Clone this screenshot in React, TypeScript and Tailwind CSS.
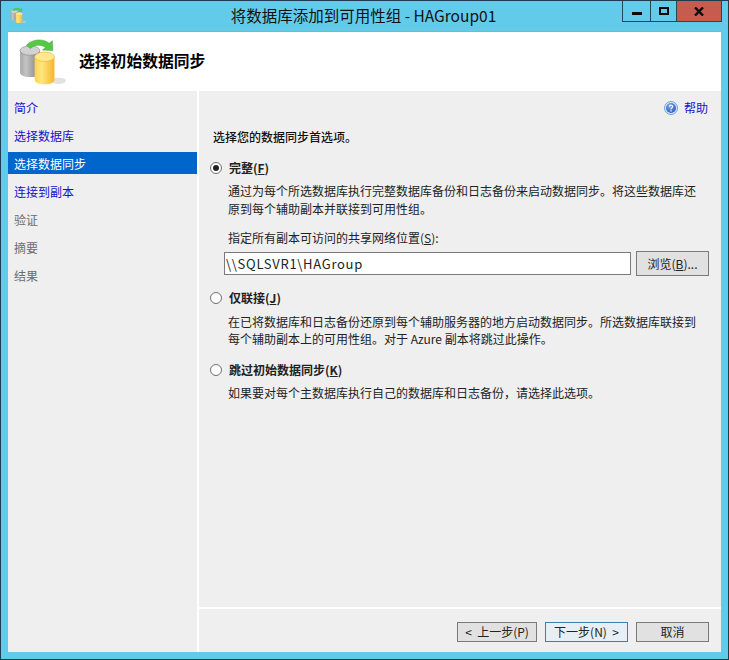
const FONT = "font-['Microsoft_YaHei','Noto_Sans_CJK_SC','Noto_Sans',sans-serif]"

function DbIcon({ size }: { size: number }) {
  return (
    <svg width={size} height={size} viewBox="0 0 48 48">
      <defs>
        <linearGradient id="gray" x1="0" x2="1" y1="0" y2="0">
          <stop offset="0" stopColor="#a8a8a8" />
          <stop offset="0.3" stopColor="#c4c4c4" />
          <stop offset="1" stopColor="#7d7d7d" />
        </linearGradient>
        <linearGradient id="gold" x1="0" x2="1" y1="0" y2="0">
          <stop offset="0" stopColor="#ffd34f" />
          <stop offset="0.35" stopColor="#ffe67d" />
          <stop offset="1" stopColor="#f7b52e" />
        </linearGradient>
      </defs>
      <ellipse cx="39" cy="42" rx="7" ry="3" fill="#cfcfcf" opacity="0.6" />
      <path d="M2 13v21c0 3 5 4.500 9.500 4.500S21 37 21 34V13z" fill="url(#gray)" />
      <ellipse cx="11.500" cy="13" rx="9.500" ry="4.500" fill="#d2d2d2" stroke="#8f8f8f" strokeWidth="0.6" />
      <path d="M16 19v22c0 3 4.500 4.500 9.500 4.500S35 44 35 41V19z" fill="url(#gold)" />
      <ellipse cx="25.500" cy="19" rx="9.500" ry="4.500" fill="#ffe88f" stroke="#e7b53c" strokeWidth="0.6" />
      <path d="M8 8C13 2 24 1 30 6l3-2.500 0.500 9.500-10-0.500 3-2.500C22 7 16 7 12 11z" fill="#58c844" stroke="#3aa636" strokeWidth="0.5" />
    </svg>
  )
}

function HelpIcon() {
  return (
    <svg width="14" height="14" viewBox="0 0 14 14">
      <defs>
        <radialGradient id="help" cx="0.4" cy="0.3" r="0.8">
          <stop offset="0" stopColor="#7fa9ea" />
          <stop offset="1" stopColor="#1f55b8" />
        </radialGradient>
      </defs>
      <circle cx="7" cy="7" r="6.500" fill="#dbe8fa" stroke="#5b8ad0" strokeWidth="0.8" />
      <circle cx="7" cy="7" r="5" fill="url(#help)" />
      <path d="M5.400 5.600C5.500 3.700 8.800 3.800 8.700 5.700 8.600 6.900 7 6.900 7 8.200" fill="none" stroke="#fff" strokeWidth="1.200" />
      <rect x="6.400" y="9.200" width="1.300" height="1.300" fill="#fff" />
    </svg>
  )
}

function Radio({ checked }: { checked?: boolean }) {
  return (
    <span className="flex h-[12px] w-[12px] items-center justify-center rounded-full border border-[#6f6f6f] bg-white">
      {checked && <span className="h-[6px] w-[6px] rounded-full bg-[#222222]" />}
    </span>
  )
}

function NavItem({ label, state }: { label: string; state: "link" | "active" | "off" }) {
  const color =
    state === "active"
      ? "bg-[#0066cc] text-white"
      : state === "link"
        ? "text-[#1a0dd0]"
        : "text-[#6d6d6d]"
  return <div className={`flex h-[22px] items-center pl-[6px] pt-[1px] text-[12px] ${color}`}>{label}</div>
}

function FootButton({ label, className }: { label: string; className: string }) {
  return (
    <button className={`flex h-[20px] items-center justify-center whitespace-pre border bg-[#e1e1e1] text-[12px] text-[#222222] ${className}`}>
      {label}
    </button>
  )
}

export default function App() {
  return (
    <div className={`flex h-[660px] w-[729px] flex-col border border-[#1d3c4e] bg-[#63cbea] ${FONT}`}>
      <div className="grid h-[30px] grid-cols-[1fr_auto_1fr] pr-[6px]">
        <div className="flex items-start pl-[9px] pt-[6px]">
          <DbIcon size={17} />
        </div>
        <div className="flex items-start pl-[4px] pt-[4px] text-[15.5px] leading-[20px] text-[#111111]">
          将数据库添加到可用性组 - HAGroup01
        </div>
        <div className="flex justify-end">
          <div className="flex h-[21px] border border-t-0 border-[#22485c]">
            <div className="flex w-[27px] items-center justify-center">
              <span className="mt-[5px] h-[3px] w-[10px] bg-[#0b0b0b]" />
            </div>
            <div className="flex w-[26px] items-center justify-center border-l border-[#22485c]">
              <span className="h-[8px] w-[10px] border-2 border-[#0b0b0b]" />
            </div>
            <div className="flex w-[45px] items-center justify-center border-l border-[#22485c] bg-[#c75b50]">
              <svg width="10" height="9" viewBox="0 0 10 9">
                <path d="M1 0.500l8 8M9 0.500l-8 8" stroke="#0b0b0b" strokeWidth="2.400" />
              </svg>
            </div>
          </div>
        </div>
      </div>

      <div className="mx-[7px] mb-[7px] flex flex-1 flex-col border-t border-[#7fb3c6] bg-white">
        <div className="flex h-[59px] items-center pl-[10px]">
          <DbIcon size={50} />
          <div className="mb-[2px] ml-[11px] text-[15.8px] font-bold text-black">选择初始数据同步</div>
        </div>

        <div className="flex flex-1">
          <div className="flex w-[189px] flex-col gap-[6px] bg-[#efefef] pt-[5px]">
            <NavItem label="简介" state="link" />
            <NavItem label="选择数据库" state="link" />
            <NavItem label="选择数据同步" state="active" />
            <NavItem label="连接到副本" state="link" />
            <NavItem label="验证" state="off" />
            <NavItem label="摘要" state="off" />
            <NavItem label="结果" state="off" />
          </div>

          <div className="ml-[2px] flex flex-1 flex-col bg-[#efefef]">
            <div className="flex-1 text-[12px] text-[#222222]">
              <div className="flex h-[32px] items-center justify-end gap-[6px] pr-[13px] pt-[1px] text-[#1a0dd0]">
                <HelpIcon />
                <span>帮助</span>
              </div>
              <div className="ml-[14px] mt-[6px] h-[16px] font-medium leading-[16px] text-[#111111]">选择您的数据同步首选项。</div>

              <div className="ml-[11px] mt-[15px] flex h-[16px] items-center gap-[7px] font-bold">
                <Radio checked />
                <span>完整(<u>F</u>)</span>
              </div>
              <div className="ml-[29px] mr-[24px] mt-[6px] leading-[18px]">
                通过为每个所选数据库执行完整数据库备份和日志备份来启动数据同步。将这些数据库还原到每个辅助副本并联接到可用性组。
              </div>
              <div className="ml-[29px] mt-[12px] h-[16px] leading-[16px]">
                指定所有副本可访问的共享网络位置(<u>S</u>):
              </div>
              <div className="ml-[25px] mt-[5px] flex items-center">
                <input
                  readOnly
                  value="\\SQLSVR1\HAGroup"
                  className="h-[23px] w-[407px] border border-[#7a7a7a] bg-white px-[1px] text-[13px] tracking-[0.7px] text-[#222222] outline-none"
                />
                <button className="ml-[5px] flex h-[25px] w-[73px] items-center justify-center border border-[#7a7a7a] bg-[#e1e1e1]">
                  浏览(<u>B</u>)...
                </button>
              </div>

              <div className="ml-[11px] mt-[14px] flex h-[16px] items-center gap-[7px] font-bold">
                <Radio />
                <span>仅联接(<u>J</u>)</span>
              </div>
              <div className="ml-[29px] mr-[14px] mt-[7px] leading-[17px]">
                在已将数据库和日志备份还原到每个辅助服务器的地方启动数据同步。所选数据库联接到每个辅助副本上的可用性组。对于 Azure 副本将跳过此操作。
              </div>

              <div className="ml-[11px] mt-[15px] flex h-[16px] items-center gap-[7px] font-bold">
                <Radio />
                <span>跳过初始数据同步(<u>K</u>)</span>
              </div>
              <div className="ml-[29px] mt-[6px] leading-[17px]">
                如果要对每个主数据库执行自己的数据库和日志备份，请选择此选项。
              </div>
            </div>

            <div className="flex h-[45px] items-start justify-end gap-[8px] border-t-2 border-white pr-[12px] pt-[13px]">
              <FootButton label="<  上一步(P)" className="w-[80px] border-[#7a7a7a]" />
              <FootButton label="下一步(N)  >" className="w-[83px] border-[#3c7fb1] bg-[#e6eff5]" />
              <FootButton label="取消" className="w-[73px] border-[#7a7a7a]" />
            </div>
          </div>
        </div>
      </div>
    </div>
  )
}
